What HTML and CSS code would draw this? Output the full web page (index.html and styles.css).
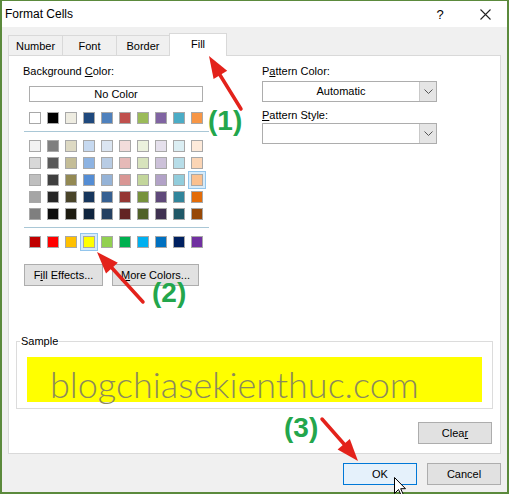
FILE: index.html
```html
<!DOCTYPE html>
<html>
<head>
<meta charset="utf-8">
<title>Format Cells</title>
<link rel="stylesheet" href="styles.css">
</head>
<body>
<div class="window">
  <div class="titlebar">
    <span class="title">Format Cells</span>
    <span class="help">?</span>
    <svg class="close" width="11" height="11" viewBox="0 0 11 11"><path d="M0.5 0.5 L10.5 10.5 M10.5 0.5 L0.5 10.5" stroke="#222" stroke-width="1.1" fill="none"/></svg>
  </div>
  <div class="tabs">
    <div class="tab w55">Number</div>
    <div class="tab w55">Font</div>
    <div class="tab w54">Border</div>
    <div class="tab active">Fill</div>
  </div>
  <div class="panel">
    <div class="top">
      <div class="left">
        <div class="lbl">Background <u>C</u>olor:</div>
        <div class="nocolor">No Color</div>
        <div class="swrow first">
          <span class="sw" style="background:#ffffff"></span>
          <span class="sw" style="background:#000000"></span>
          <span class="sw" style="background:#eeece1"></span>
          <span class="sw" style="background:#1f497d"></span>
          <span class="sw" style="background:#4f81bd"></span>
          <span class="sw" style="background:#c0504d"></span>
          <span class="sw" style="background:#9bbb59"></span>
          <span class="sw" style="background:#8064a2"></span>
          <span class="sw" style="background:#4bacc6"></span>
          <span class="sw" style="background:#f79646"></span>
        </div>
        <div class="sep"></div>
        <div class="theme">
          <div class="swrow">
            <span class="sw" style="background:#f2f2f2"></span>
            <span class="sw" style="background:#7f7f7f"></span>
            <span class="sw" style="background:#ddd9c3"></span>
            <span class="sw" style="background:#c6d9f0"></span>
            <span class="sw" style="background:#dbe5f1"></span>
            <span class="sw" style="background:#f2dcdb"></span>
            <span class="sw" style="background:#ebf1dd"></span>
            <span class="sw" style="background:#e5e0ec"></span>
            <span class="sw" style="background:#dbeef3"></span>
            <span class="sw" style="background:#fdeada"></span>
          </div>
          <div class="swrow">
            <span class="sw" style="background:#d8d8d8"></span>
            <span class="sw" style="background:#595959"></span>
            <span class="sw" style="background:#c4bd97"></span>
            <span class="sw" style="background:#8db3e2"></span>
            <span class="sw" style="background:#b8cce4"></span>
            <span class="sw" style="background:#e5b9b7"></span>
            <span class="sw" style="background:#d7e3bc"></span>
            <span class="sw" style="background:#ccc1d9"></span>
            <span class="sw" style="background:#b7dde8"></span>
            <span class="sw" style="background:#fbd5b5"></span>
          </div>
          <div class="swrow">
            <span class="sw" style="background:#bfbfbf"></span>
            <span class="sw" style="background:#3f3f3f"></span>
            <span class="sw" style="background:#938953"></span>
            <span class="sw" style="background:#548dd4"></span>
            <span class="sw" style="background:#95b3d7"></span>
            <span class="sw" style="background:#d99694"></span>
            <span class="sw" style="background:#c3d69b"></span>
            <span class="sw" style="background:#b2a2c7"></span>
            <span class="sw" style="background:#92cddc"></span>
            <span class="sw hl" style="background:#fac08f"></span>
          </div>
          <div class="swrow">
            <span class="sw" style="background:#a5a5a5"></span>
            <span class="sw" style="background:#262626"></span>
            <span class="sw" style="background:#494429"></span>
            <span class="sw" style="background:#17365d"></span>
            <span class="sw" style="background:#366092"></span>
            <span class="sw" style="background:#953734"></span>
            <span class="sw" style="background:#76923c"></span>
            <span class="sw" style="background:#5f497a"></span>
            <span class="sw" style="background:#31859b"></span>
            <span class="sw" style="background:#e36c09"></span>
          </div>
          <div class="swrow">
            <span class="sw" style="background:#7f7f7f"></span>
            <span class="sw" style="background:#0c0c0c"></span>
            <span class="sw" style="background:#1d1b10"></span>
            <span class="sw" style="background:#0f243e"></span>
            <span class="sw" style="background:#244061"></span>
            <span class="sw" style="background:#632423"></span>
            <span class="sw" style="background:#4f6128"></span>
            <span class="sw" style="background:#3f3151"></span>
            <span class="sw" style="background:#205867"></span>
            <span class="sw" style="background:#974806"></span>
          </div>
        </div>
        <div class="sep"></div>
        <div class="swrow standard">
          <span class="sw" style="background:#c00000"></span>
          <span class="sw" style="background:#ff0000"></span>
          <span class="sw" style="background:#ffc000"></span>
          <span class="sw hl" style="background:#ffff00"></span>
          <span class="sw" style="background:#92d050"></span>
          <span class="sw" style="background:#00b050"></span>
          <span class="sw" style="background:#00b0f0"></span>
          <span class="sw" style="background:#0070c0"></span>
          <span class="sw" style="background:#002060"></span>
          <span class="sw" style="background:#7030a0"></span>
        </div>
        <div class="btnrow">
          <button class="btn fx">F<u>i</u>ll Effects...</button>
          <button class="btn more"><u>M</u>ore Colors...</button>
        </div>
      </div>
      <div class="right">
        <div class="lbl">P<u>a</u>ttern Color:</div>
        <div class="dd">
          <span class="dd-text">Automatic</span>
          <span class="dd-btn"><svg width="9" height="5" viewBox="0 0 9 5"><path d="M0.5 0.5 L4.5 4.5 L8.5 0.5" stroke="#555" stroke-width="1" fill="none"/></svg></span>
        </div>
        <div class="lbl lbl2"><u>P</u>attern Style:</div>
        <div class="dd">
          <span class="dd-text"></span>
          <span class="dd-btn"><svg width="9" height="5" viewBox="0 0 9 5"><path d="M0.5 0.5 L4.5 4.5 L8.5 0.5" stroke="#555" stroke-width="1" fill="none"/></svg></span>
        </div>
      </div>
    </div>
    <fieldset class="sample">
      <legend>Sample</legend>
      <div class="yellow">
        <span class="watermark">blogchiasekienthuc.com</span>
      </div>
    </fieldset>
    <div class="clearrow">
      <button class="btn">Clea<u>r</u></button>
    </div>
  </div>
  <div class="footer">
    <button class="btn ok">OK</button>
    <button class="btn">Cancel</button>
  </div>
</div>

<div class="annot">
  <svg class="arrows" width="509" height="494" viewBox="0 0 509 494">
    <g stroke="#e3221b" stroke-width="3.5" stroke-linecap="round" fill="none">
      <line x1="241" y1="109" x2="220" y2="75"/>
      <line x1="143" y1="302" x2="112" y2="268"/>
      <line x1="322" y1="419" x2="344" y2="444"/>
    </g>
    <g fill="#e3221b">
      <polygon points="209,56 227.2,70.7 213.6,78.9"/>
      <polygon points="97,252 117.8,262.8 106,273.6"/>
      <polygon points="358,461 349.8,439.1 337.6,449.5"/>
    </g>
  </svg>
  <span class="num n1">(1)</span>
  <span class="num n2">(2)</span>
  <span class="num n3">(3)</span>
  <svg class="cursor" width="13" height="20" viewBox="0 0 13 20"><path d="M0.5 0.5 L0.5 16.5 L4.5 12.5 L7.5 19 L9.5 18 L6.7 11.7 L11.5 11.7 Z" fill="#fff" stroke="#000" stroke-width="1"/></svg>
</div>
</body>
</html>
```

FILE: styles.css
```css
html, body {
  margin: 0;
  padding: 0;
}
body {
  font-family: "Liberation Sans", Arial, sans-serif;
  font-size: 11px;
  color: #000;
  background: #f0f0f0;
}
.window {
  position: relative;
  width: 509px;
  height: 494px;
  box-sizing: border-box;
  border: 2px solid #5b8a3c;
  border-top-width: 1px;
  background: #f0f0f0;
}
.titlebar {
  height: 26px;
  background: #fff;
  display: flex;
  align-items: center;
  padding-left: 3px;
}
.title {
  font-size: 12px;
}
.help {
  margin-left: auto;
  width: 10px;
  text-align: center;
  font-size: 13px;
}
.close {
  margin-left: 35px;
  margin-right: 16px;
  display: block;
}
.tabs {
  height: 28px;
  display: flex;
  align-items: flex-end;
  padding-left: 6px;
}
.tab {
  box-sizing: border-box;
  height: 20px;
  border: 1px solid #d9d9d9;
  border-bottom: none;
  margin-left: -1px;
  display: flex;
  align-items: center;
  justify-content: center;
  background: #f0f0f0;
}
.tab:first-child {
  margin-left: 0;
}
.w55 { width: 55px; }
.w54 { width: 54px; }
.tab.active {
  width: 58px;
  height: 23px;
  margin-bottom: -1px;
  background: #fff;
  position: relative;
  z-index: 1;
  padding-bottom: 3px;
}
.panel {
  margin-left: 6px;
  width: 493px;
  height: 399px;
  box-sizing: border-box;
  border: 1px solid #d9d9d9;
  background: #fff;
}
.top {
  display: grid;
  grid-template-columns: 239px 1fr;
  padding: 7px 0 0 14px;
}
.lbl {
  line-height: 16px;
  height: 16px;
}
.nocolor {
  box-sizing: border-box;
  margin: 7px 0 0 6px;
  width: 174px;
  height: 16px;
  border: 1px solid #adadad;
  line-height: 14px;
  text-align: center;
}
.swrow {
  display: flex;
  gap: 6px;
  margin-left: 6px;
}
.swrow.first {
  margin-top: 10px;
}
.sw {
  display: block;
  width: 12px;
  height: 12px;
  box-sizing: border-box;
  border: 1px solid #a8a8a8;
}
.sw.hl {
  box-shadow: 0 0 0 2px #d6ebfa, 0 0 0 3px #92c5ec;
}
.sep {
  width: 185px;
  height: 1px;
  background: #a9c7d6;
  margin: 7px 0 0 1px;
}
.theme {
  margin-top: 8px;
  display: flex;
  flex-direction: column;
  gap: 5px;
}
.swrow.standard {
  margin-top: 8px;
}
.btnrow {
  display: flex;
  gap: 9px;
  margin: 16px 0 0 1px;
}
.btn {
  box-sizing: border-box;
  width: 74px;
  height: 22px;
  border: 1px solid #adadad;
  background: #e1e1e1;
  font-family: inherit;
  font-size: 11px;
  color: #000;
  padding: 0;
  margin: 0;
}
.btn.fx { width: 79px; }
.btn.more { width: 87px; }
.dd {
  box-sizing: border-box;
  width: 175px;
  height: 21px;
  border: 1px solid #adadad;
  display: flex;
  margin-top: 2px;
  background: #fff;
}
.lbl2 {
  margin-top: 5px;
}
.lbl2 + .dd {
  margin-top: 0;
}
.dd-text {
  flex: 1;
  text-align: center;
  line-height: 19px;
}
.dd-btn {
  width: 16px;
  border-left: 1px solid #c9c9c9;
  background: #e5e5e5;
  display: flex;
  align-items: center;
  justify-content: center;
}
.sample {
  margin: 47px 7px 0;
  padding: 8px 10px 6px;
  border: 1px solid #dcdcdc;
  min-width: 0;
}
.sample legend {
  padding: 0 1px;
  margin-left: -7px;
  line-height: 16px;
  font-size: 11px;
}
.yellow {
  position: relative;
  height: 45px;
  background: #ffff00;
}
.watermark {
  position: absolute;
  left: 23px;
  top: 9px;
  font-family: Lato, "Open Sans", sans-serif;
  font-weight: 300;
  font-size: 36px;
  line-height: 36px;
  color: #8c8a5c;
  white-space: nowrap;
}
.clearrow {
  display: flex;
  justify-content: flex-end;
  margin-top: 13px;
  padding-right: 8px;
}
.footer {
  display: flex;
  justify-content: flex-end;
  gap: 10px;
  margin-top: 9px;
  padding-right: 6px;
}
.btn.ok {
  border-color: #0078d7;
  background: #e5f1fb;
}
.annot {
  position: absolute;
  left: 0;
  top: 0;
  width: 509px;
  height: 494px;
  pointer-events: none;
}
.arrows {
  position: absolute;
  left: 0;
  top: 0;
}
.num {
  position: absolute;
  font-family: "Liberation Sans", Arial, sans-serif;
  font-weight: bold;
  font-size: 28px;
  line-height: 22px;
  color: #23a64c;
}
.n1 { left: 208px; top: 110px; }
.n2 { left: 152px; top: 282px; }
.n3 { left: 284px; top: 417px; }
.cursor {
  position: absolute;
  left: 394px;
  top: 477px;
}
```
